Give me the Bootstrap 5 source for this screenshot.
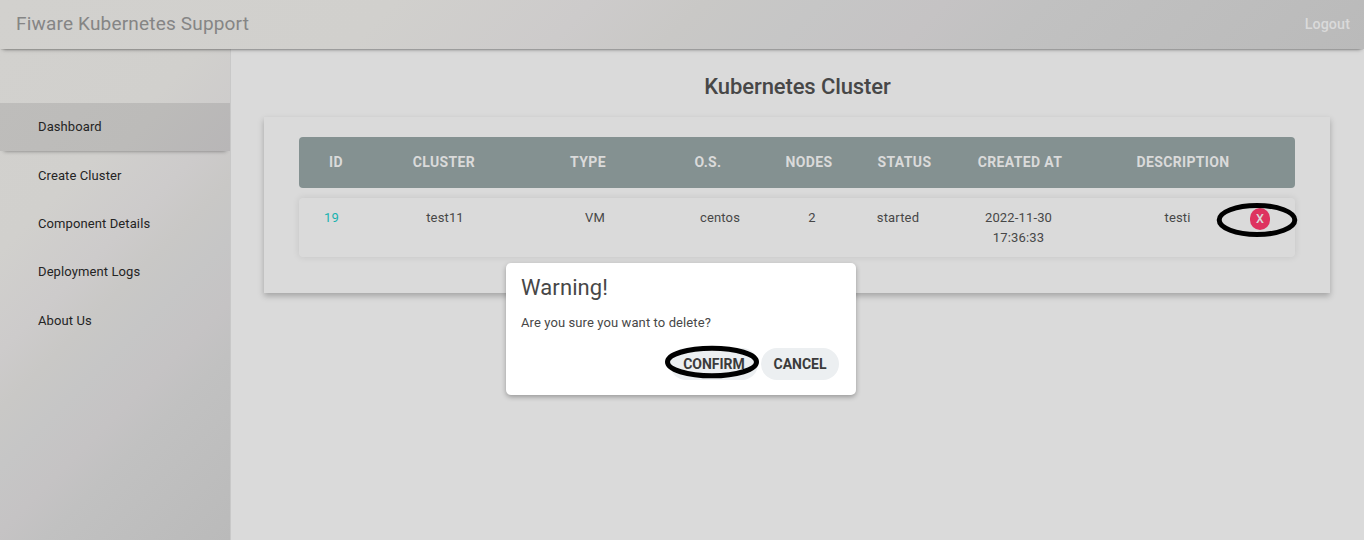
<!DOCTYPE html>
<html lang="en">
<head>
<meta charset="utf-8">
<meta name="viewport" content="width=device-width, initial-scale=1">
<title>Fiware Kubernetes Support</title>
<link rel="stylesheet" href="https://cdn.jsdelivr.net/npm/bootstrap@5.3.0/dist/css/bootstrap.min.css">
<style>
:root{--metal:linear-gradient(135deg,#d2d1ce 0%,#d1d0cd 28%,#cdcbcb 42%,#c9c8c6 50%,#c6c6c6 58%,#c5c3c4 67%,#c1c1c1 74%,#bababa 100%)}
body{font-family:Roboto,sans-serif;background:#dadada;color:#474747;font-size:13px;line-height:20px;letter-spacing:.1px}
.topbar{height:49px;background:var(--metal);box-shadow:0 3px 4px -3px rgba(0,0,0,.6),0 1px 1px -1px rgba(0,0,0,.3);z-index:2;padding:0 14px 2px 16px}
.brand{font-size:19px;color:#858585;letter-spacing:.18px}
.logout{font-size:14.3px;font-weight:500;color:#dadada;letter-spacing:.1px}
.side{width:231px;padding-top:54px;background:var(--metal);border-right:1px solid #c8c8c8}
.side .nav-link{height:48.4px;padding:0 0 0 38px;color:#242424;letter-spacing:.1px;display:flex;align-items:center}
.side .nav-link.current{background:linear-gradient(135deg,#bebdbb,#bcbbb9 60%,#b8b6b7);box-shadow:0 4px 4px -4px rgba(0,0,0,.45)}
.page-title{font-size:22px;line-height:26px;font-weight:500;margin:25px 0 0;letter-spacing:-.1px}
.panel{margin:17px 34px 0 33px;height:176px;padding:20px 35px;box-shadow:0 3px 6px rgba(0,0,0,.25)}
.heads,.entry{display:grid;text-align:center;border-radius:4px}
.heads{height:51px;background:#849191;color:#dadada;font-size:14px;font-weight:700;letter-spacing:.35px;align-items:center;padding-bottom:1px;grid-template-columns:74px 142px 146px 94px 108px 83px 148px 178px}
.entry{height:59px;margin-top:10px;padding-top:10px;box-shadow:0 0 7px rgba(0,0,0,.1);letter-spacing:.15px;grid-template-columns:65px 162px 138px 112px 72px 100px 141px 16px 145px 20px}
.entry-id{color:#19b2b0}
.remove{width:20px;height:22px;border:0;border-radius:10px;background:#de335f;color:#dadada;font-size:12.5px;font-weight:500;padding:0;letter-spacing:0}
.dialog-box{left:506px;top:263px;width:350px;height:132px;padding:10px 17px 0 15px;border-radius:5px;box-shadow:0 2px 5px rgba(0,0,0,.3);z-index:3}
.dialog-title{font-size:22px;line-height:30px;font-weight:400;letter-spacing:.1px;margin:0}
.pill{height:32px;border:0;border-radius:16px;background:#eceff1;color:#3b3b3b;font-weight:700;font-size:14px;letter-spacing:0;padding:0 0 1px}
.ring{z-index:4;pointer-events:none}
</style>
</head>
<body class="vh-100 overflow-hidden d-flex flex-column">
<header class="topbar d-flex align-items-center justify-content-between position-relative flex-shrink-0">
  <span class="brand">Fiware Kubernetes Support</span>
  <a class="logout text-decoration-none" href="#">Logout</a>
</header>
<div class="d-flex flex-grow-1">
  <nav class="side nav flex-column flex-nowrap flex-shrink-0">
    <a class="nav-link current" href="#">Dashboard</a>
    <a class="nav-link" href="#">Create Cluster</a>
    <a class="nav-link" href="#">Component Details</a>
    <a class="nav-link" href="#">Deployment Logs</a>
    <a class="nav-link" href="#">About Us</a>
  </nav>
  <main class="flex-grow-1">
    <h1 class="page-title text-center">Kubernetes Cluster</h1>
    <section class="panel">
      <div class="heads">
        <span>ID</span><span>CLUSTER</span><span>TYPE</span><span>O.S.</span><span>NODES</span><span>STATUS</span><span>CREATED AT</span><span>DESCRIPTION</span>
      </div>
      <div class="entry">
        <span class="entry-id">19</span><span>test11</span><span>VM</span><span>centos</span><span>2</span><span>started</span><span>2022-11-30<br>17:36:33</span><span></span><span>testi</span>
        <span class="position-relative"><button class="remove d-block" type="button">X</button>
          <svg class="ring position-absolute" style="left:-34px;top:-6px" width="82" height="36" viewBox="0 0 82 36"><ellipse cx="41" cy="18" rx="37.8" ry="14.5" fill="none" stroke="#000" stroke-width="5"/></svg>
        </span>
      </div>
    </section>
  </main>
</div>
<div class="dialog-box position-absolute bg-white" role="dialog">
  <h2 class="dialog-title">Warning!</h2>
  <p class="mb-0" style="margin-top:10px;letter-spacing:.1px">Are you sure you want to delete?</p>
  <div class="d-flex justify-content-end" style="margin-top:15px;gap:3px">
    <span class="position-relative"><button class="pill d-block" style="width:88px" type="button">CONFIRM</button>
      <svg class="ring position-absolute" style="left:-6px;top:-3px" width="96" height="34" viewBox="0 0 96 34"><ellipse cx="48" cy="17" rx="44.5" ry="13.8" fill="none" stroke="#000" stroke-width="5"/></svg>
    </span>
    <button class="pill" style="width:78px" type="button">CANCEL</button>
  </div>
</div>
<script src="https://cdn.jsdelivr.net/npm/bootstrap@5.3.0/dist/js/bootstrap.bundle.min.js"></script>
</body>
</html>
